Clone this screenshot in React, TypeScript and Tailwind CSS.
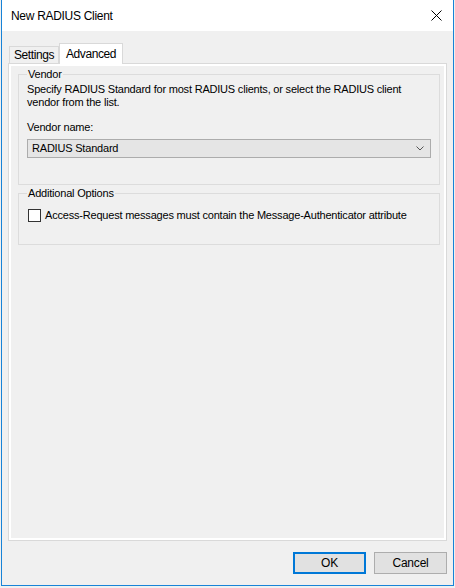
import React from 'react';

const font = { fontFamily: '"Liberation Sans", Arial, sans-serif' };

function GroupBox({ title, children, className }: { title: string; children: React.ReactNode; className?: string }) {
  return (
    <fieldset className={`border border-[#dcdcdc] px-[8px] ${className ?? ''}`}>
      <legend className="px-[1px] text-[11px] leading-[14px] tracking-[-0.2px] text-black">{title}</legend>
      {children}
    </fieldset>
  );
}

export default function App() {
  return (
    <div className="h-[588px] w-[455px] bg-[#f0f0f0] pl-px" style={font}>
      <div className="flex h-[586px] w-[453px] flex-col border-x border-b border-[#1883d7] bg-[#f0f0f0]">
        {/* title bar */}
        <div className="flex h-[31px] shrink-0 items-center justify-between bg-white pl-[9px] pr-[10px]">
          <span className="text-[12px] tracking-[-0.3px] text-black">New RADIUS Client</span>
          <svg width="11" height="11" viewBox="0 0 11 11" className="mr-[1px]">
            <path d="M0.5 0.5 L10.5 10.5 M10.5 0.5 L0.5 10.5" stroke="#000" strokeWidth="1" />
          </svg>
        </div>

        {/* tabs */}
        <div className="flex flex-1 flex-col px-[6px] pt-[12px] text-[11px] tracking-[-0.2px] text-black">
          <div className="relative z-10 flex h-[20px] items-end pl-[1px]">
            <div className="flex h-[17px] w-[50px] items-center justify-center border border-b-0 border-[#d9d9d9] bg-[#f0f0f0] text-[12px] tracking-[-0.4px]">
              Settings
            </div>
            <div className="-mb-px flex h-[21px] w-[64px] items-center justify-center border border-b-0 border-[#d9d9d9] bg-white pb-[1px] text-[12px] tracking-[-0.4px]">
              Advanced
            </div>
          </div>

          <div className="h-[478px] border border-[#d9d9d9] bg-white p-[2px]">
            <div className="flex h-full flex-col gap-px bg-[#f0f0f0] pl-[7px] pr-[4px] pt-px">
              <GroupBox title="Vendor" className="h-[118px]">
                <p className="mt-[2px] leading-[13px]">
                  Specify RADIUS Standard for most RADIUS clients, or select the RADIUS client vendor from the list.
                </p>
                <p className="mt-[12px] leading-[13px]">Vendor name:</p>
                <div className="mt-[5px] flex h-[19px] items-center justify-between border border-[#acacac] bg-[#e5e5e5] pl-[4px] pr-[6px]">
                  <span>RADIUS Standard</span>
                  <svg width="8" height="5" viewBox="0 0 8 5">
                    <path d="M0.5 0.5 L4 4 L7.5 0.5" fill="none" stroke="#555" strokeWidth="1" />
                  </svg>
                </div>
              </GroupBox>

              <GroupBox title="Additional Options" className="h-[59px]">
                <label className="mt-[9px] flex items-center gap-[4px] pl-[1px] leading-[13px]">
                  <span className="h-[13px] w-[13px] shrink-0 border border-[#333] bg-white" />
                  <span>Access-Request messages must contain the Message-Authenticator attribute</span>
                </label>
              </GroupBox>
            </div>
          </div>

          <div className="mt-[11px] flex justify-end gap-[8px]">
            <button
              type="button"
              className="h-[22px] w-[73px] border-2 border-[#0078d7] bg-[#e1e1e1] text-[12px]"
            >
              OK
            </button>
            <button
              type="button"
              className="h-[22px] w-[73px] border border-[#adadad] bg-[#e1e1e1] text-[12px]"
            >
              Cancel
            </button>
          </div>
        </div>
      </div>
    </div>
  );
}
